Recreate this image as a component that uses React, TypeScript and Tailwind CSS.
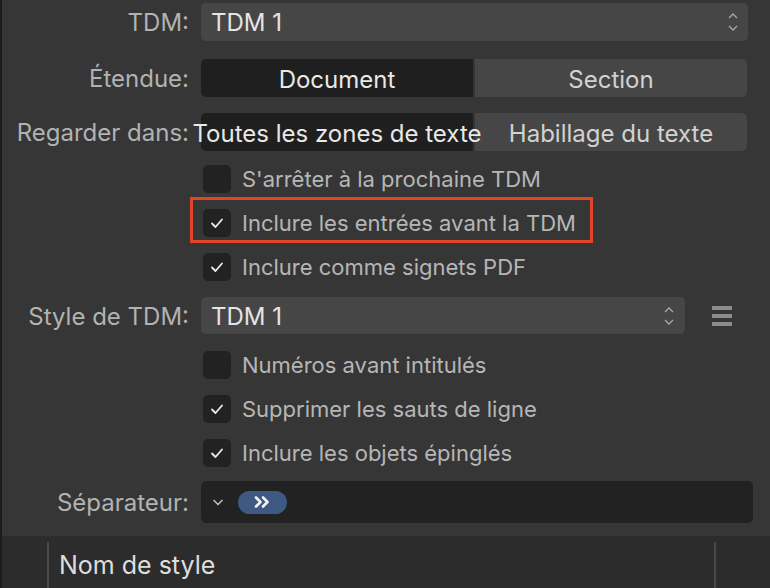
import React from "react";

const font = { fontFamily: "Inter, 'Noto Sans', sans-serif" };

function Updown({ className = "" }: { className?: string }) {
  return (
    <svg width="12" height="22" viewBox="0 0 12 22" className={className} fill="none" stroke="#a8a8a8" strokeWidth="1.3">
      <path d="M2 7 L6 3 L10 7" />
      <path d="M2 15 L6 19 L10 15" />
    </svg>
  );
}

function Check() {
  return (
    <svg width="14" height="12" viewBox="0 0 14 12" fill="none" stroke="#ececec" strokeWidth="1.8" strokeLinecap="round" strokeLinejoin="round">
      <path d="M2 6.5 L5.5 10 L12 2.5" />
    </svg>
  );
}

function CheckRow({ label, checked }: { label: string; checked: boolean }) {
  return (
    <div className="flex h-[44px] items-center pl-[203px]">
      <div className="flex h-[28px] w-[28px] items-center justify-center rounded-[5px] bg-[#222222]">
        {checked && <Check />}
      </div>
      <span className="ml-[11px] text-[22px] text-[#b6b6b6]">{label}</span>
    </div>
  );
}

function Label({ children }: { children: React.ReactNode }) {
  return <div className="w-[189px] shrink-0 pt-[2px] text-right text-[24px] text-[#b2b2b2] whitespace-nowrap">{children}</div>;
}

export default function App() {
  return (
    <div className="h-[588px] w-[770px] overflow-hidden bg-[#363636] border-l-[2px] border-[#1c1c1c]" style={font}>
      <div className="-ml-[2px]">
        <div className="flex h-[38px] items-center mt-[3px]">
          <Label>TDM:</Label>
          <div className="ml-[12px] flex h-[38px] w-[547px] items-center justify-between rounded-[5px] bg-[#464646] pl-[10px] pr-[9px]">
            <span className="pt-[2px] text-[24px] text-[#e4e4e4]">TDM 1</span>
            <Updown />
          </div>
        </div>

        <div className="mt-[18px] flex h-[38px] items-center">
          <Label>Étendue:</Label>
          <div className="ml-[12px] flex h-[38px] gap-[2px]">
            <div className="flex w-[272px] shrink-0 items-center justify-center rounded-l-[5px] bg-[#1f1f1f] pt-[3px] text-[24px] text-[#e8e8e8]">Document</div>
            <div className="flex w-[272px] shrink-0 items-center justify-center rounded-r-[5px] bg-[#464646] pt-[3px] text-[24px] text-[#d2d2d2]">Section</div>
          </div>
        </div>

        <div className="mt-[16px] flex h-[38px] items-center">
          <Label>Regarder dans:</Label>
          <div className="ml-[12px] flex h-[38px] gap-[2px]">
            <div className="relative z-10 flex w-[272px] shrink-0 items-center justify-center rounded-l-[5px] bg-[#1f1f1f] pt-[3px] text-[24px] text-[#e8e8e8] whitespace-nowrap">
              <span className="shrink-0">Toutes les zones de texte</span>
            </div>
            <div className="flex w-[272px] shrink-0 items-center justify-center rounded-r-[5px] bg-[#464646] pt-[3px] text-[24px] text-[#d2d2d2]">Habillage du texte</div>
          </div>
        </div>

        <div className="mt-[6px]">
          <CheckRow label="S'arrêter à la prochaine TDM" checked={false} />
          <div className="relative">
            <CheckRow label="Inclure les entrées avant la TDM" checked />
            <div className="pointer-events-none absolute left-[190px] top-[-4px] h-[46px] w-[403px] border-[3px] border-[#e2432b]" />
          </div>
          <CheckRow label="Inclure comme signets PDF" checked />
        </div>

        <div className="mt-[8px] flex h-[37px] items-center">
          <Label>Style de TDM:</Label>
          <div className="ml-[12px] flex h-[37px] w-[484px] items-center justify-between rounded-[5px] bg-[#464646] pl-[10px] pr-[10px]">
            <span className="pt-[2px] text-[24px] text-[#e4e4e4]">TDM 1</span>
            <Updown />
          </div>
          <div className="ml-[27px] flex flex-col gap-[4px]">
            <div className="h-[4px] w-[20px] bg-[#8c8c8c]" />
            <div className="h-[4px] w-[20px] bg-[#8c8c8c]" />
            <div className="h-[4px] w-[20px] bg-[#8c8c8c]" />
          </div>
        </div>

        <div className="mt-[9px]">
          <CheckRow label="Numéros avant intitulés" checked={false} />
          <CheckRow label="Supprimer les sauts de ligne" checked />
          <CheckRow label="Inclure les objets épinglés" checked />
        </div>

        <div className="mt-[6px] flex h-[42px] items-center">
          <Label>Séparateur:</Label>
          <div className="ml-[12px] flex h-[42px] w-[552px] items-center rounded-[5px] bg-[#222222] pl-[11px]">
            <svg width="12" height="8" viewBox="0 0 12 8" fill="none" stroke="#c4c4c4" strokeWidth="1.5">
              <path d="M1.5 2 L6 6.5 L10.5 2" />
            </svg>
            <div className="ml-[14px] flex h-[23px] w-[49px] items-center justify-center rounded-full bg-[#3e5a82]">
              <svg width="20" height="14" viewBox="0 0 20 14" fill="none" stroke="#f2f2f2" strokeWidth="2.6" strokeLinecap="round" strokeLinejoin="round">
                <path d="M3 2.5 L7.5 7 L3 11.5" />
                <path d="M10 2.5 L14.5 7 L10 11.5" />
              </svg>
            </div>
          </div>
        </div>

        <div className="mt-[13px] flex h-[52px] bg-[#2c2c2c] pt-[6px]">
          <div className="ml-[47px] flex w-[669px] items-center border-x-[2px] border-[#4a4a4a] pl-[10px]">
            <span className="pt-[2px] text-[25px] text-[#dedede]">Nom de style</span>
          </div>
        </div>
      </div>
    </div>
  );
}
